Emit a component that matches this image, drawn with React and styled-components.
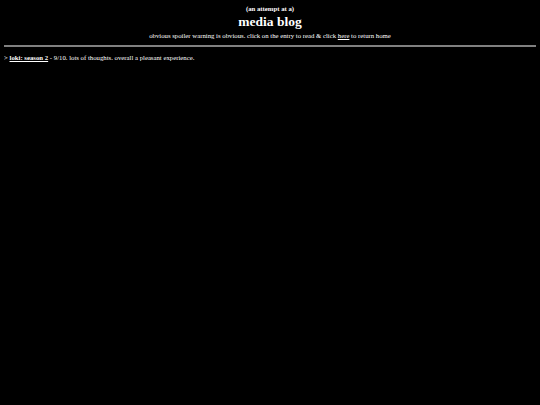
import React from 'react';
import styled, { createGlobalStyle } from 'styled-components';

const GlobalStyle = createGlobalStyle`
  html, body {
    background: #000000;
  }
  body {
    margin: 4px;
    color: #ffffff;
    font-family: "Liberation Serif", "Times New Roman", serif;
    font-size: 6.75px;
  }
`;

const Header = styled.header`
  display: flex;
  flex-direction: column;
  align-items: center;
  text-align: center;
`;

const Kicker = styled.div`
  font-weight: bold;
  font-size: 6.75px;
  margin-top: 1px;
`;

const Title = styled.h1`
  font-size: 13.5px;
  font-weight: bold;
  margin: 2px 0 2px;
`;

const Note = styled.p`
  margin: 0;
  font-size: 6.75px;
`;

const Link = styled.a`
  color: #ffffff;
  text-decoration: underline;
  text-decoration-thickness: 1px;
  text-underline-offset: 1px;
  text-decoration-skip-ink: none;
  font-weight: ${(p) => (p.$bold ? 'bold' : 'normal')};
`;

const Divider = styled.hr`
  border: none;
  border-top: 2px solid #808080;
  margin: 6px 0 7px;
`;

const EntryList = styled.ul`
  list-style: none;
  margin: 0;
  padding: 0;
`;

const Entry = styled.li`
  font-size: 6.75px;
  line-height: 8px;
`;

const entries = [
  { title: 'loki: season 2', blurb: '9/10. lots of thoughts. overall a pleasant experience.' },
];

export default function App() {
  return (
    <>
      <GlobalStyle />
      <Header>
        <Kicker>(an attempt at a)</Kicker>
        <Title>media blog</Title>
        <Note>
          obvious spoiler warning is obvious. click on the entry to read &amp; click{' '}
          <Link href="#">here</Link> to return home
        </Note>
      </Header>
      <Divider />
      <EntryList>
        {entries.map((e) => (
          <Entry key={e.title}>
            &gt; <Link $bold href="#">{e.title}</Link> - {e.blurb}
          </Entry>
        ))}
      </EntryList>
    </>
  );
}
